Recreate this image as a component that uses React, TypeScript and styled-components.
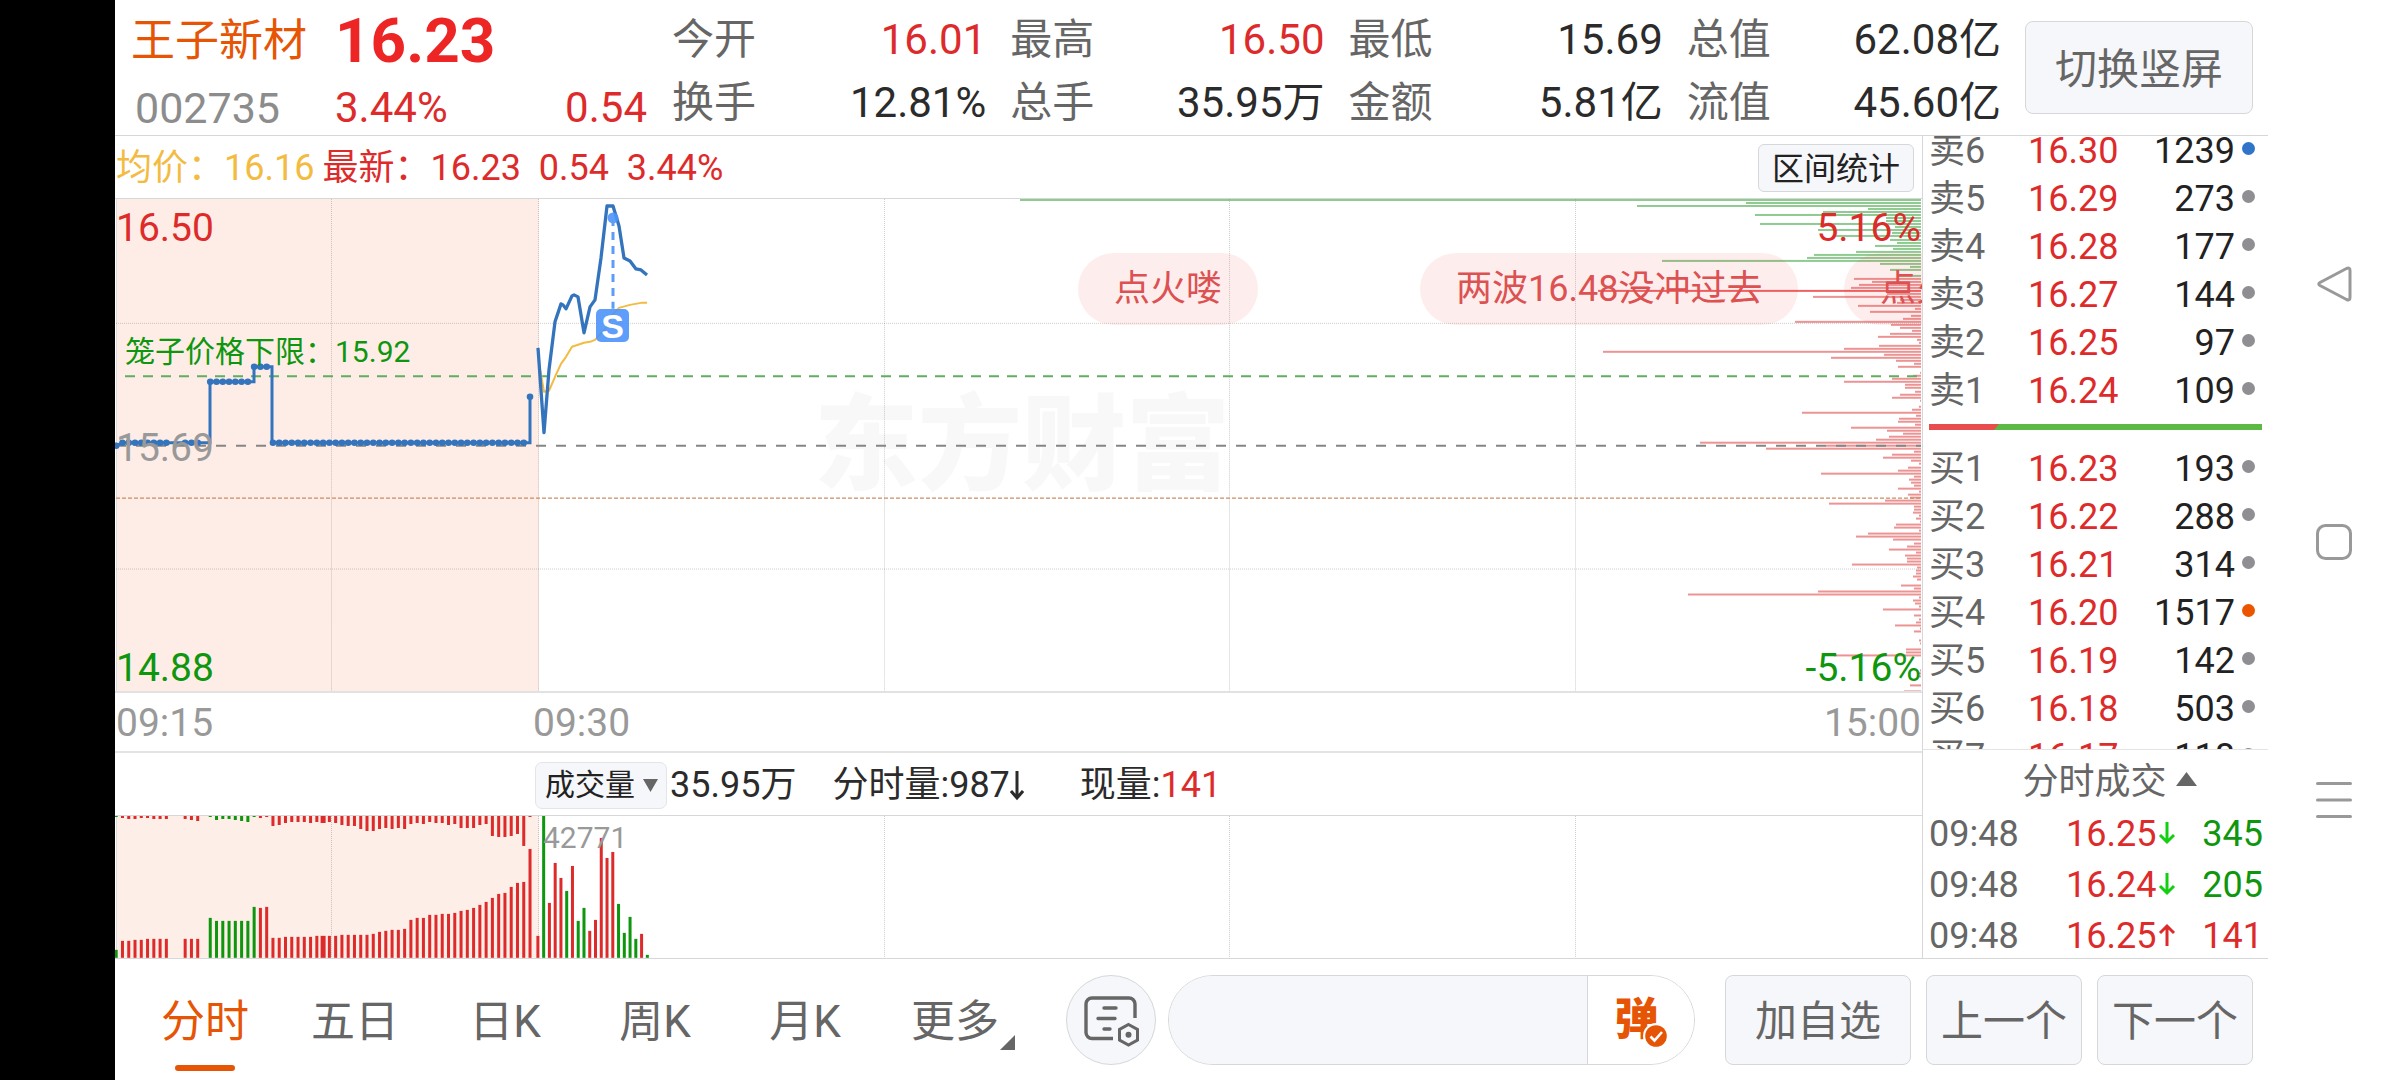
import React from "react";
import styled, { createGlobalStyle } from "styled-components";

const c = {
  red: "#dd2b2b",
  green: "#0f960f",
  brand: "#e65505",
  ink: "#2b2b2b",
  text: "#666666",
  mute: "#999999",
  line: "#d5d7d9",
  fill: "#f6f7fa",
  blue: "#3374bd",
  avg: "#f3bb42",
};

const GlobalStyle = createGlobalStyle`
  * { box-sizing: border-box; }
  body {
    margin: 0;
    background: #fff;
    color: ${c.ink};
    font-family: Roboto, "Noto Sans CJK SC", sans-serif;
  }
  button, input {
    font-family: inherit;
    margin: 0;
    padding: 0;
    border: 0;
    background: none;
    outline: none;
  }
  table { border-collapse: collapse; }
  th, td { padding: 0; font-weight: 400; text-align: left; }
`;

const Screen = styled.div`
  display: flex;
  min-height: 100vh;
`;

const Cutout = styled.div`
  flex: 0 0 115px;
  background: #000;
`;

const Page = styled.main`
  flex: 1;
  min-width: 0;
  display: flex;
  flex-direction: column;
`;

/* ---------- header ---------- */

const Header = styled.header`
  display: flex;
  height: 136px;
  border-bottom: 1px solid ${c.line};
`;

const Identity = styled.div`
  flex: 0 0 557px;
  display: grid;
  grid-template-columns: 204px 1fr auto;
  grid-template-rows: 67px 67px;
  align-items: center;
  padding: 7px 25px 0 16px;
  font-size: 42px;
  line-height: 56px;
  color: ${c.red};
`;

const StockName = styled.h1`
  margin: 0;
  font-size: 44px;
  font-weight: 400;
  color: ${c.brand};
`;

const LastPrice = styled.strong`
  grid-column: span 2;
  font-size: 62px;
  font-weight: 700;
  color: #ee2525;
`;

const StockCode = styled.span`
  padding-left: 4px;
  font-size: 43px;
  color: #8c8c8c;
`;

const Stats = styled.dl`
  flex: 1;
  display: grid;
  grid-template-columns: repeat(4, 1fr);
  grid-auto-rows: 63px;
  margin: 0;
  padding-top: 8px;
`;

const Stat = styled.div<{ $up?: boolean }>`
  display: flex;
  justify-content: space-between;
  align-items: center;
  padding-right: 24px;
  font-size: 42px;
  line-height: 56px;

  dt { color: ${c.text}; }
  dd { margin: 0; color: ${(p) => (p.$up ? c.red : c.ink)}; }
`;

const Button = styled.button<{ $w: number }>`
  width: ${(p) => p.$w}px;
  height: 90px;
  padding-top: 4px;
  border: 1px solid ${c.line};
  border-radius: 8px;
  background: ${c.fill};
  color: ${c.text};
  font-size: 42px;
  line-height: 56px;
`;

const HeaderAction = styled.div`
  padding: 21px 15px 0 0;

  button { height: 93px; }
`;

/* ---------- body ---------- */

const Body = styled.div`
  display: flex;
  height: 823px;
  border-bottom: 1px solid ${c.line};
`;

const Charts = styled.section`
  flex: 1;
  min-width: 0;
  display: flex;
  flex-direction: column;
`;

const Legend = styled.div`
  display: flex;
  align-items: center;
  gap: 8px;
  height: 63px;
  padding: 2px 8px 0 1px;
  border-bottom: 1px solid ${c.line};
  font-size: 36px;
  line-height: 48px;
  white-space: pre;
`;

const Avg = styled.span`
  color: ${c.avg};
`;

const Latest = styled.span`
  flex: 1;
  color: ${c.red};
`;

const SmallButton = styled.button`
  width: 156px;
  height: 48px;
  padding-top: 2px;
  border: 1px solid ${c.line};
  border-radius: 6px;
  background: ${c.fill};
  color: #222;
  font-size: 32px;
  line-height: 44px;
`;

const Plot = styled.div<{ $h: number; $b: number; $line: string }>`
  position: relative;
  height: ${(p) => p.$h}px;
  border-bottom: ${(p) => p.$b}px solid ${(p) => p.$line};
  overflow: hidden;

  > svg {
    display: block;
    position: relative;
    width: 100%;
    height: 100%;
    overflow: visible;
  }
`;

const AxisLabel = styled.span<{ $x: "left" | "right"; $top: number; $color: string }>`
  position: absolute;
  ${(p) => p.$x}: 1px;
  top: ${(p) => p.$top}px;
  font-size: 39px;
  line-height: 48px;
  color: ${(p) => p.$color};
`;

const CageLabel = styled.span`
  position: absolute;
  left: 10px;
  top: 133px;
  font-size: 30px;
  line-height: 40px;
  color: ${c.green};
`;

const Watermark = styled.span`
  position: absolute;
  left: 699px;
  top: 192px;
  font-size: 104px;
  line-height: 112px;
  font-weight: 900;
  color: #f8f8f8;
`;

const Danmaku = styled.span<{ $left: number }>`
  position: absolute;
  left: ${(p) => p.$left}px;
  top: 54px;
  height: 72px;
  padding: 0 36px;
  border-radius: 36px;
  background: rgba(240, 50, 50, 0.09);
  color: #dc5151;
  font-size: 36px;
  line-height: 72px;
  white-space: nowrap;
`;

const TradeMark = styled.span`
  position: absolute;
  left: 481px;
  top: 110px;
  width: 33px;
  height: 33px;
  border-radius: 5px;
  background: rgba(77, 148, 250, 0.9);
  color: #fff;
  font-family: "Liberation Sans", sans-serif;
  font-size: 34px;
  line-height: 34px;
  font-weight: 700;
  text-align: center;
`;

const TimeAxis = styled.div`
  display: grid;
  grid-template-columns: 417px 1fr auto;
  align-items: center;
  height: 60px;
  padding: 2px 1px 0 1px;
  border-bottom: 2px solid #e4e4e4;
  font-size: 39px;
  line-height: 48px;
  color: ${c.mute};
`;

const VolumeBar = styled.div`
  display: flex;
  align-items: center;
  height: 63px;
  padding: 2px 0 0 420px;
  border-bottom: 1px solid ${c.line};
  font-size: 36px;
  line-height: 48px;
`;

const VolumeSelect = styled.button`
  display: flex;
  align-items: center;
  justify-content: space-between;
  width: 132px;
  height: 47px;
  margin-right: 3px;
  padding: 0 8px 0 9px;
  border: 1px solid #e4e5e8;
  border-radius: 7px;
  background: ${c.fill};
  color: #222;
  font-size: 30px;
  line-height: 40px;
`;

const VolumeItem = styled.span`
  display: flex;
  align-items: center;
  margin-right: 36px;

  b { font-weight: 400; color: ${c.red}; }
  svg { margin-right: 20px; }
`;

const VolumeMax = styled.span`
  position: absolute;
  left: 428px;
  top: 4px;
  font-size: 30px;
  line-height: 36px;
  color: ${c.mute};
`;

/* ---------- order book ---------- */

const Side = styled.aside`
  flex: 0 0 346px;
  display: flex;
  flex-direction: column;
  border-left: 1px solid ${c.line};
  font-size: 36px;
  overflow: hidden;
`;

const Book = styled.div`
  flex: 0 0 614px;
  overflow: hidden;
  border-bottom: 1px solid #e4e4e4;
`;

const BookInner = styled.div`
  margin-top: -9px;
`;

const BookTable = styled.table`
  width: 100%;
  table-layout: fixed;

  tr { height: 48px; }
  th, td { line-height: 48px; }
  th { width: 105px; padding-left: 6px; color: ${c.text}; }
  td:nth-child(2) { width: 92px; color: ${c.red}; }
  td:nth-child(3) { text-align: right; color: #222; }
  td:nth-child(4) { width: 33px; }
`;

const Dot = styled.i<{ $color: string }>`
  display: block;
  width: 13px;
  height: 13px;
  margin: 0 0 6px 7px;
  border-radius: 50%;
  background: ${(p) => p.$color};
`;

const Ratio = styled.div`
  height: 6px;
  margin: 9px 6px 15px;
  background: #5cb944;
`;

const RatioBuy = styled.div`
  width: 21%;
  height: 6px;
  background: #e84c4c;
  clip-path: polygon(0 0, 100% 0, calc(100% - 5px) 100%, 0 100%);
`;

const TradesToggle = styled.button`
  flex: 0 0 59px;
  display: flex;
  justify-content: center;
  gap: 9px;
  align-items: center;
  padding: 4px 4px 0 32px;
  color: ${c.text};
  font-size: 36px;
  line-height: 48px;

  svg { margin-bottom: 6px; }
`;

const TradesTable = styled.table`
  width: 100%;
  table-layout: fixed;

  tr { height: 51px; }
  td { line-height: 51px; }
  td:nth-child(1) { width: 143px; padding-left: 6px; color: ${c.text}; }
  td:nth-child(2) { width: 92px; color: ${c.red}; }
  td:nth-child(3) { width: 18px; }
  td:nth-child(4) { padding-right: 5px; text-align: right; }
  svg { display: block; margin-bottom: 3px; }
`;

const Qty = styled.td<{ $up: boolean }>`
  color: ${(p) => (p.$up ? c.red : c.green)};
`;

/* ---------- toolbar ---------- */

const Toolbar = styled.footer`
  display: flex;
  align-items: center;
  height: 121px;
  padding: 0 15px;
`;

const Tabs = styled.nav`
  flex: 0 0 900px;
  display: grid;
  grid-template-columns: repeat(6, 1fr);
  height: 100%;
`;

const Tab = styled.button<{ $on?: boolean }>`
  position: relative;
  padding-top: 4px;
  font-size: 44px;
  line-height: 60px;
  color: ${(p) => (p.$on ? c.brand : c.text)};

  &::after {
    content: "";
    position: absolute;
    left: calc(50% - 30px);
    bottom: 9px;
    width: 60px;
    height: 6px;
    border-radius: 3px;
    background: ${(p) => (p.$on ? c.brand : "transparent")};
  }

  svg {
    position: absolute;
    right: 15px;
    bottom: 30px;
  }
`;

const RoundButton = styled.button`
  display: flex;
  justify-content: center;
  align-items: center;
  width: 90px;
  height: 90px;
  margin-left: 36px;
  padding: 2px 0 0 2px;
  border: 1px solid ${c.line};
  border-radius: 50%;
  background: ${c.fill};
`;

const Composer = styled.div`
  flex: 1;
  display: flex;
  height: 90px;
  margin: 0 30px 0 12px;
  border: 1px solid ${c.line};
  border-radius: 45px;
  overflow: hidden;
`;

const ComposerInput = styled.input`
  flex: 1;
  min-width: 0;
  padding: 0 36px;
  background: ${c.fill};
  font-size: 36px;
`;

const DanmakuToggle = styled.button`
  position: relative;
  width: 107px;
  border-left: 1px solid ${c.line};
  padding-right: 9px;
  background: #fff;
  color: ${c.brand};
  font-size: 44px;
  line-height: 60px;
  font-weight: 900;

  svg {
    position: absolute;
    left: 55px;
    top: 47px;
  }
`;

const Pager = styled.div`
  display: flex;
  gap: 15px;
`;

/* ---------- system navigation ---------- */

const SystemNav = styled.nav`
  flex: 0 0 132px;
  display: flex;
  flex-direction: column;
  justify-content: center;
  align-items: center;
  gap: 222px;
  padding-top: 4px;

  button { width: 36px; height: 36px; }
  svg { display: block; }
`;

/* ---------- data ---------- */

const stats: [string, string, boolean?][] = [
  ["今开", "16.01", true],
  ["最高", "16.50", true],
  ["最低", "15.69"],
  ["总值", "62.08亿"],
  ["换手", "12.81%"],
  ["总手", "35.95万"],
  ["金额", "5.81亿"],
  ["流值", "45.60亿"],
];

const grey = "#8e8e93";
const sells: [string, string, string, string][] = [
  ["卖6", "16.30", "1239", "#2f74c8"],
  ["卖5", "16.29", "273", grey],
  ["卖4", "16.28", "177", grey],
  ["卖3", "16.27", "144", grey],
  ["卖2", "16.25", "97", grey],
  ["卖1", "16.24", "109", grey],
];
const buys: [string, string, string, string][] = [
  ["买1", "16.23", "193", grey],
  ["买2", "16.22", "288", grey],
  ["买3", "16.21", "314", grey],
  ["买4", "16.20", "1517", "#ec5500"],
  ["买5", "16.19", "142", grey],
  ["买6", "16.18", "503", grey],
  ["买7", "16.17", "118", grey],
];

const trades: [string, string, boolean, string][] = [
  ["09:48", "16.25", false, "345"],
  ["09:48", "16.24", false, "205"],
  ["09:48", "16.25", true, "141"],
];

const price =
  "423,149 429,234 434,171 440,123 446,105 448,106 451,110 457,97 459,96 463,98 469,134 475,108 480,101 486,59 492,7 498,7 504,27 509,59 515,62 521,70 526,71 532,76";
const average =
  "424,164 429,193 434,192 440,178 446,165 451,158 457,148 463,146 469,144 475,143 480,141 492,128 497,116 504,109 515,106 526,104 532,104";

/* Holdings per 0.01 price tick, from 16.50 down to 14.88. */
const chips = [
  901, 175, 284, 53, 98, 166, 35, 35, 161, 26, 103, 29, 88, 31, 24, 46, 28, 65, 107, 114, 259, 41, 11, 31, 0, 24,
  67, 49, 62, 70, 323, 34, 108, 21, 24, 63, 6, 51, 10, 18, 126, 30, 21, 9, 31, 43, 4, 2, 42, 77, 318, 37, 90, 25,
  7, 23, 0, 1, 8, 29, 77, 16, 16, 6, 21, 29, 1, 0, 2, 9, 119, 5, 22, 23, 6, 70, 34, 18, 32, 45, 221, 95, 155, 7,
  29, 38, 10, 2, 13, 23, 100, 7, 12, 10, 7, 23, 2, 13, 11, 36, 92, 7, 7, 8, 2, 5, 1, 25, 27, 2, 53, 65, 28, 7, 14,
  32, 5, 16, 14, 14, 69, 4, 5, 5, 8, 4, 0, 20, 7, 103, 233, 2, 8, 6, 2, 38, 0, 7, 2, 5, 26, 1, 7, 0, 0, 2, 1, 0,
  15, 15, 87, 0, 0, 0, 0, 1, 2, 2, 0, 0, 11, 0, 17,
];
const LAST_PROFIT_TICK = 25;
const CURRENT_TICK = 30;

/* Call auction, one entry per sample: matched volume and unmatched volume. */
const matched = [
  8, 17, 17, 18, 18, 19, 19, 19, 19, 0, 0, 19, 19, 19, 0, 40, 37, 37, 37, 37, 37, 37, 51, 50, 51, 20, 20, 21, 21,
  21, 21, 21, 22, 22, 22, 22, 23, 23, 23, 23, 23, 24, 26, 27, 28, 28, 29, 38, 40, 40, 43, 43, 44, 44, 45, 47, 48,
  50, 53, 56, 60, 64, 65, 71, 75, 76, 109,
];
const unmatched = [
  1, 2, 3, 3, 2, 2, 3, 3, 3, 0, 0, 3, 4, 5, 0, 1, 4, 3, 3, 4, 5, 6, 1, 2, 1, 10, 9, 7, 6, 6, 6, 7, 6, 7, 6, 7, 9,
  10, 10, 13, 15, 15, 13, 12, 13, 12, 13, 8, 7, 8, 6, 7, 7, 9, 8, 12, 12, 12, 9, 8, 20, 21, 21, 20, 18, 30, 1,
];
const isSellSide = (k: number) => k === 0 || (k >= 15 && k <= 22);
const auctionX = (k: number) => 1.2 + k * 6.27;

const volume: [number, boolean][] = [
  [22, true], [142, false], [55, true], [95, true], [80, true], [67, false], [92, true], [37, false],
  [50, false], [27, true], [38, true], [120, true], [100, true], [106, true], [54, false], [25, false],
  [41, false], [19, false], [24, true], [3, false],
];

const auctionY = (k: number) => {
  if (k === 0) return 247;
  if (k === 66) return 198;
  if (k >= 15 && k <= 21) return 183;
  if (k >= 22 && k <= 24) return 168;
  return 244;
};
const auctionGaps = [9, 10, 14];

const gridX = [216, 423, 769, 1114, 1460];

function Grid({ h, rows }: { h: number; rows: number[] }) {
  return (
    <g stroke="#000" strokeOpacity="0.2" strokeWidth="1" strokeDasharray="1 1">
      {gridX.map((x) => (
        <path key={x} d={`M${x}.5 0V${h}`} />
      ))}
      {rows.map((y) => (
        <path key={y} d={`M1 ${y}.5H1806`} />
      ))}
    </g>
  );
}

function PriceChart() {
  return (
    <Plot $h={495} $b={2} $line="#e2e2e2">
      <Watermark>东方财富</Watermark>
      <svg viewBox="0 0 1807 493" preserveAspectRatio="none" role="img" aria-label="分时走势">
        <rect x="2" y="0" width="422" height="493" fill="#fa5a1e" fillOpacity="0.11" />
        <path d="M1.5 0V493" stroke="#ddd" />
        <Grid h={493} rows={[124, 370]} />
        {chips.map((len, i) =>
          len ? (
            <rect
              key={i}
              x={1806 - len}
              y={Math.round(i * 3.04)}
              width={len}
              height="2"
              fill={i <= LAST_PROFIT_TICK ? "#55ae58" : i === CURRENT_TICK ? "#e83c3c" : "#e25c5c"}
              fillOpacity={i === CURRENT_TICK ? 0.8 : 0.66}
            />
          ) : null
        )}
        <path d="M10 177.5H1806" stroke="#5fae62" strokeWidth="2" strokeDasharray="10 8" />
        <path d="M1 247H1806" stroke="#858585" strokeWidth="2" strokeDasharray="10 10" />
        <path d="M1 299.5H1806" stroke="#cc8d62" strokeWidth="1.4" strokeDasharray="4 2" />
        <path
          d="M1 247L8 244H95V183H139V168H157V244H415V198"
          fill="none"
          stroke={c.blue}
          strokeWidth="3"
        />
        {matched.map((_, k) =>
          auctionGaps.includes(k) ? null : (
            <circle key={k} cx={auctionX(k)} cy={auctionY(k)} r="3.3" fill={c.blue} />
          )
        )}
        <polyline points={average} fill="none" stroke={c.avg} strokeWidth="2" strokeLinejoin="round" />
        <polyline points={price} fill="none" stroke={c.blue} strokeWidth="3.3" strokeLinejoin="round" />
        <circle cx="498" cy="19" r="5.5" fill="#4d94fa" fillOpacity="0.9" />
        <path d="M498 19V110" stroke="#5b9df7" strokeWidth="3" strokeDasharray="8 6" />
      </svg>
      <AxisLabel $x="left" $top={5} $color={c.red}>16.50</AxisLabel>
      <AxisLabel $x="left" $top={225} $color={c.mute}>15.69</AxisLabel>
      <AxisLabel $x="left" $top={445} $color={c.green}>14.88</AxisLabel>
      <AxisLabel $x="right" $top={5} $color={c.red}>5.16%</AxisLabel>
      <AxisLabel $x="right" $top={445} $color={c.green}>-5.16%</AxisLabel>
      <CageLabel>笼子价格下限：15.92</CageLabel>
      <TradeMark>S</TradeMark>
      <Danmaku $left={963}>点火喽</Danmaku>
      <Danmaku $left={1305}>两波16.48没冲过去</Danmaku>
      <Danmaku $left={1729}>点火喽</Danmaku>
    </Plot>
  );
}

function VolumeChart() {
  return (
    <Plot $h={142} $b={0} $line="transparent">
      <svg viewBox="0 0 1807 142" preserveAspectRatio="none" role="img" aria-label="成交量">
        <rect x="2" y="0" width="422" height="142" fill="#fdeee8" />
        <path d="M1.5 0V142" stroke="#ddd" />
        <Grid h={142} rows={[]} />
        {matched.map((h, k) => {
          const w = k === 33 ? 5 : 3;
          const x = auctionX(k) - w / 2;
          const fill = isSellSide(k) ? c.green : c.red;
          return (
            <g key={k} fill={fill}>
              <rect x={x} y={142 - h} width={w} height={h} />
              <rect x={x} y="0" width={w} height={unmatched[k]} />
            </g>
          );
        })}
        {volume.map(([h, up], i) => (
          <rect key={i} x={421.4 + i * 5.76} y={142 - h} width="3" height={h} fill={up ? c.red : c.green} />
        ))}
      </svg>
      <VolumeMax>42771</VolumeMax>
    </Plot>
  );
}

function BookSide({ rows, label }: { rows: [string, string, string, string][]; label: string }) {
  return (
    <BookTable aria-label={label}>
      <tbody>
        {rows.map(([name, p, qty, color]) => (
          <tr key={name}>
            <th scope="row">{name}</th>
            <td>{p}</td>
            <td>{qty}</td>
            <td><Dot $color={color} /></td>
          </tr>
        ))}
      </tbody>
    </BookTable>
  );
}

function Arrow({ up }: { up: boolean }) {
  return (
    <svg width="18" height="24" viewBox="0 0 18 24" fill="none" stroke={up ? c.red : "#12cf12"} strokeWidth="3">
      <path d={up ? "M9 23V3M2 10L9 3L16 10" : "M9 1V21M2 14L9 21L16 14"} />
    </svg>
  );
}

export default function App() {
  return (
    <Screen>
      <GlobalStyle />
      <Cutout />
      <Page>
        <Header>
          <Identity>
            <StockName>王子新材</StockName>
            <LastPrice>16.23</LastPrice>
            <StockCode>002735</StockCode>
            <span>3.44%</span>
            <span>0.54</span>
          </Identity>
          <Stats>
            {stats.map(([k, v, up]) => (
              <Stat key={k} $up={up}>
                <dt>{k}</dt>
                <dd>{v}</dd>
              </Stat>
            ))}
          </Stats>
          <HeaderAction>
            <Button $w={228}>切换竖屏</Button>
          </HeaderAction>
        </Header>

        <Body>
          <Charts>
            <Legend>
              <Avg>均价：16.16</Avg>
              <Latest>最新：16.23  0.54  3.44%</Latest>
              <SmallButton>区间统计</SmallButton>
            </Legend>
            <PriceChart />
            <TimeAxis>
              <span>09:15</span>
              <span>09:30</span>
              <span>15:00</span>
            </TimeAxis>
            <VolumeBar>
              <VolumeSelect>
                成交量
                <svg width="15" height="13" viewBox="0 0 15 13">
                  <path d="M0 0H15L7.5 13Z" fill="#666" />
                </svg>
              </VolumeSelect>
              <VolumeItem>35.95万</VolumeItem>
              <VolumeItem>
                分时量:987
                <svg width="14" height="32" viewBox="0 0 14 32" fill="none" stroke="#2b2b2b" strokeWidth="3">
                  <path d="M7 2V29M1 22L7 29L13 22" />
                </svg>
              </VolumeItem>
              <VolumeItem>
                现量:<b>141</b>
              </VolumeItem>
            </VolumeBar>
            <VolumeChart />
          </Charts>

          <Side>
            <Book>
              <BookInner>
                <BookSide rows={sells} label="卖盘" />
                <Ratio>
                  <RatioBuy />
                </Ratio>
                <BookSide rows={buys} label="买盘" />
              </BookInner>
            </Book>
            <TradesToggle>
              分时成交
              <svg width="21" height="14" viewBox="0 0 21 14">
                <path d="M10.5 0L21 14H0Z" fill="#666" />
              </svg>
            </TradesToggle>
            <TradesTable aria-label="分时成交">
              <tbody>
                {trades.map(([t, p, up, qty], i) => (
                  <tr key={i}>
                    <td>{t}</td>
                    <td>{p}</td>
                    <td><Arrow up={up} /></td>
                    <Qty $up={up}>{qty}</Qty>
                  </tr>
                ))}
              </tbody>
            </TradesTable>
          </Side>
        </Body>

        <Toolbar>
          <Tabs>
            <Tab $on>分时</Tab>
            <Tab>五日</Tab>
            <Tab>日K</Tab>
            <Tab>周K</Tab>
            <Tab>月K</Tab>
            <Tab>
              更多
              <svg width="15" height="15" viewBox="0 0 15 15">
                <path d="M15 0V15H0Z" fill="#666" />
              </svg>
            </Tab>
          </Tabs>
          <RoundButton aria-label="设置">
            <svg width="56" height="52" viewBox="0 0 56 52" fill="none" stroke="#666" strokeWidth="3.4" strokeLinecap="round">
              <path d="M29 43.5H8A6 6 0 0 1 2 37.5V9A6 6 0 0 1 8 3H45A6 6 0 0 1 51 9V23" strokeLinecap="butt" />
              <path d="M20 13H32M14 23.5H31M20 34H26" />
              <path d="M44.5 29.5L53.5 34.5V45L44.5 50L35.5 45V34.5Z" strokeWidth="3" />
              <circle cx="44.5" cy="39.8" r="3" fill="#666" stroke="none" />
            </svg>
          </RoundButton>
          <Composer>
            <ComposerInput aria-label="弹幕" />
            <DanmakuToggle aria-pressed="true">
              弹
              <svg width="26" height="26" viewBox="0 0 26 26">
                <circle cx="13" cy="13" r="13" fill="#fff" />
                <circle cx="13" cy="13" r="10.8" fill={c.brand} />
                <path d="M7.5 13.5L11.5 17.5L19 9" fill="none" stroke="#fff" strokeWidth="2.6" />
              </svg>
            </DanmakuToggle>
          </Composer>
          <Pager>
            <Button $w={186}>加自选</Button>
            <Button $w={156}>上一个</Button>
            <Button $w={156}>下一个</Button>
          </Pager>
        </Toolbar>
      </Page>
      <SystemNav>
        <button aria-label="返回">
          <svg width="36" height="36" viewBox="0 0 36 36" fill="none" stroke="#999" strokeWidth="3">
            <path d="M30.5 2.5L4 16.5Q1.5 18 4 19.5L30.5 33.5Q34 35 34 31.5V4.5Q34 1 30.5 2.5Z" />
          </svg>
        </button>
        <button aria-label="主页">
          <svg width="36" height="36" viewBox="0 0 36 36" fill="none" stroke="#999" strokeWidth="3">
            <rect x="1.5" y="1.5" width="33" height="33" rx="8" />
          </svg>
        </button>
        <button aria-label="最近任务">
          <svg width="36" height="36" viewBox="0 0 36 36" fill="none" stroke="#999" strokeWidth="3" strokeLinecap="round">
            <path d="M1.5 1.5H34.5M1.5 18H34.5M1.5 34.5H34.5" />
          </svg>
        </button>
      </SystemNav>
    </Screen>
  );
}
